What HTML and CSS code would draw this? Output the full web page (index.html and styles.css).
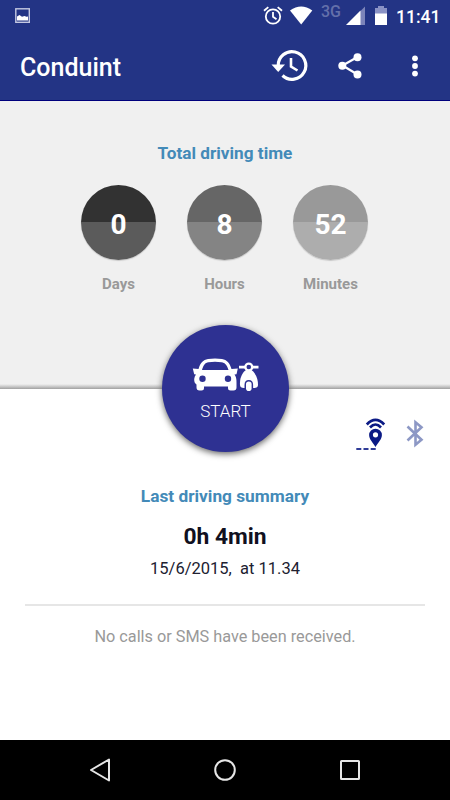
FILE: index.html
```html
<!DOCTYPE html>
<html lang="en">
<head>
<meta charset="utf-8">
<title>Conduint</title>
<link rel="stylesheet" href="styles.css">
</head>
<body>
<div class="app">
  <header class="header">
    <div class="status">
      <svg class="photo" width="16" height="16" viewBox="0 0 16 16"><rect x=".8" y=".8" width="13.500" height="13.500" fill="none" stroke="#c4c8e2" stroke-width="1.400"/><path d="M2 12.500V8.500L4.500 7l2.500 1.700 2.500-.7 2 .7 1.500-.2v4z" fill="#fff"/></svg>
      <svg class="signals" width="52" height="32" viewBox="0 0 52 32">
        <g fill="none" stroke="#fff" stroke-width="1.800"><circle cx="10" cy="16.500" r="7.200"/><path d="M10 12v4.800l3.500 2.400M1 10.800l4.300-3.700M19 10.800l-4.300-3.700"/></g>
        <path d="M27 10.500Q38.200 2.500 49.300 10.500L38.200 24.500z" fill="#fff"/>
      </svg>
      <span class="network">3G</span>
      <svg class="power" width="46" height="32" viewBox="0 0 46 32">
        <path d="M3.500 25L22 6.500V25z" fill="#7c84ba"/><path d="M3 25L17.500 10.500V25z" fill="#fff"/>
        <path d="M32 8h3V6h6v2h3v17H32z" fill="#8a92c5"/><path d="M32 13.500h12V25H32z" fill="#fff"/>
      </svg>
      <span class="time">11:41</span>
    </div>
    <div class="toolbar">
      <h1>Conduint</h1>
      <svg class="actions" width="180" height="40" viewBox="0 0 180 40">
        <g fill="none" stroke="#fff"><path d="M8.200 20A13.800 13.800 0 1 1 12.500 29.500" stroke-width="3.200"/><path d="M21 12v8.500l6.500 4" stroke-width="2.600"/></g>
        <path d="M1.500 18.500H15L8.200 26z" fill="#fff"/>
        <path d="M87.500 11L72.500 19.500l15 9" fill="none" stroke="#fff" stroke-width="2.200"/>
        <g fill="#fff"><circle cx="87.500" cy="11.300" r="4"/><circle cx="72.300" cy="19.800" r="4"/><circle cx="87.500" cy="28.600" r="4"/><circle cx="145" cy="12.300" r="2.900"/><circle cx="145" cy="20" r="2.900"/><circle cx="145" cy="27.600" r="2.900"/></g>
      </svg>
    </div>
  </header>
  <section class="total">
    <h2>Total driving time</h2>
    <div class="counters">
      <div class="counter"><div class="disc days">0</div><span>Days</span></div>
      <div class="counter"><div class="disc hours">8</div><span>Hours</span></div>
      <div class="counter"><div class="disc minutes">52</div><span>Minutes</span></div>
    </div>
    <div class="start">
      <svg width="68" height="36" viewBox="0 0 68 36">
        <path fill="#fff" fill-rule="evenodd" d="M.8 11.500L6.500 12C8.500 5.500 11 3 16 2Q23 .8 30 2C35 3 37.500 5.500 39.500 12L45.800 11.500 44.500 17.300 42.500 17.500Q44.600 20 44.500 25.500V30.500Q44.500 33.500 41.500 33.500H38.500Q36 33.500 36 31V29.500H12V31Q12 33.500 9.500 33.500H7.500Q4.500 33.500 4.500 30.500V27.500Q2 26 2.200 22 2.500 19 4 17.500L2.200 17.300zM10 13H36.500C35 7.800 33 6 29.500 5.300Q23 4.300 16.500 5.300C13 6 11.500 7.800 10 13z"/>
        <g fill="#2e3192"><circle cx="10.500" cy="21.800" r="3.200"/><circle cx="36" cy="21.800" r="3.200"/></g>
        <path fill="#fff" d="M47 8.700h19.500v2.800H47zM51 16Q53 12.700 56.700 12.700T62.400 16Q66 21 66 28q0 3-4 3H52q-4 0-4-3Q47.500 21 51 16z"/>
        <circle cx="56.800" cy="10" r="4.600" fill="#fff"/>
        <circle cx="56.800" cy="10" r="2.300" fill="#2e3192"/><path fill="#2e3192" d="M52.500 31.500v-3.500q0-5 4.300-5t4.300 5v3.500z"/>
        <rect x="54" y="24.500" width="5.600" height="9.500" rx="2.800" fill="#fff"/>
      </svg>
      <span>START</span>
    </div>
  </section>
  <main class="summary">
    <svg class="links" width="80" height="40" viewBox="0 0 80 40">
      <g fill="none" stroke="#0b1a85"><path d="M11.800 9.500Q20.500.3 29.200 9.500" stroke-width="2.700"/><path d="M15 12.500q5.500-6 11 0" stroke-width="2.600"/><path d="M1.300 34H21" stroke-width="1.900" stroke-dasharray="5 2.200" opacity=".85"/></g>
      <path fill="#0b1a85" fill-rule="evenodd" d="M20.500 13.700a6.400 6.400 0 0 1 6.400 6.400c0 4.200-3.600 7.400-6.400 12-2.800-4.600-6.400-7.800-6.400-12A6.400 6.400 0 0 1 20.500 13.700zm0 3.500a2.600 2.600 0 1 0 0 5.200 2.600 2.600 0 0 0 0-5.200z"/>
      <path d="M52.500 11.500l14 13.200-6 5V7.300l6 5-14 13.200" fill="none" stroke="#8d98c5" stroke-width="2.600"/>
    </svg>
    <h2>Last driving summary</h2>
    <div class="duration">0h 4min</div>
    <div class="date">15/6/2015,&nbsp; at 11.34</div>
    <p>No calls or SMS have been received.</p>
  </main>
  <nav class="nav">
    <svg width="22" height="26" viewBox="0 0 22 26"><path d="M2 13L20 2.500v21z"/></svg>
    <svg width="24" height="26" viewBox="0 0 24 26"><circle cx="12" cy="13" r="9.800"/></svg>
    <svg width="22" height="26" viewBox="0 0 22 26"><rect x="2" y="4" width="18" height="18" rx=".5"/></svg>
  </nav>
</div>
</body>
</html>
```
FILE: styles.css
```css
* { box-sizing: border-box; }
body { margin: 0; font-family: Roboto, sans-serif; }
h1, h2, p { margin: 0; }
svg { display: block; flex: none; }
.app { width: 450px; height: 800px; display: flex; flex-direction: column; background: #fff; overflow: hidden; }
.header { height: 101px; flex: none; background: #233485; border-bottom: 1px solid #00007c; color: #fff; }
.status { height: 32px; display: flex; align-items: flex-start; padding: 0 10px 0 15px; }
.photo { margin-top: 8px; }
.signals { margin-left: 232px; }
.network { flex: none; width: 28px; padding-left: 6px; margin-top: 2px; font-weight: 500; font-size: 16px; line-height: 20px; color: #6470aa; }
.time { font-size: 17.500px; font-weight: 500; line-height: 22px; margin: 6px 0 0 7px; white-space: nowrap; }
.toolbar { height: 68px; display: flex; align-items: center; justify-content: space-between; padding-left: 20px; }
h1 { font-size: 25px; font-weight: 500; line-height: 32px; margin-top: 4px; }
.total { height: 288px; flex: none; position: relative; background: linear-gradient(#f0f0f0 283px, #d2d2d2 285px, #a0a0a0 288px); padding-top: 41px; }
h2 { font-size: 17.200px; font-weight: 700; line-height: 22px; color: #438ab8; text-align: center; }
.counters { display: flex; justify-content: center; gap: 31px; padding: 21px 1px 0 0; }
.counter { width: 75px; text-align: center; color: #999; font-size: 15px; font-weight: 700; line-height: 20px; }
.disc { height: 75px; border-radius: 50%; font-size: 28px; line-height: 79px; color: #fff; box-shadow: 0 1px 1px #c8c8c8; margin-bottom: 14px; }
.days { background: linear-gradient(#323232 50%, #5b5b5b 50%); }
.hours { background: linear-gradient(#666 50%, #848484 50%); }
.minutes { background: linear-gradient(#999 50%, #adadad 50%); }
.start { position: absolute; left: 162px; top: 224px; width: 127px; height: 127px; border-radius: 50%; background: #2e3192; box-shadow: 0 2px 6px #666; display: flex; flex-direction: column; align-items: center; padding-top: 32px; color: #fff; font-size: 17px; font-weight: 300; line-height: 22px; }
.start span { margin-top: 7px; }
.summary { flex: 1; display: flex; flex-direction: column; align-items: center; }
.links { align-self: flex-end; margin: 26px 15px 30px 0; }
.summary h2 { font-size: 17.300px; }
.duration { font-size: 22.800px; font-weight: 700; line-height: 28px; margin-top: 16px; color: #101020; }
.date { font-size: 16.500px; line-height: 22px; margin-top: 7px; color: #202030; }
.summary p { width: 400px; border-top: 2px solid #e6e6e6; margin-top: 24px; padding-top: 20px; text-align: center; font-size: 16.250px; line-height: 22px; color: #999; }
.nav { height: 60px; flex: none; background: #000; display: flex; justify-content: space-between; align-items: center; padding: 0 89px; }
.nav path, .nav circle, .nav rect { fill: none; stroke: #e6e6e6; stroke-width: 2; stroke-linejoin: round; }
```
